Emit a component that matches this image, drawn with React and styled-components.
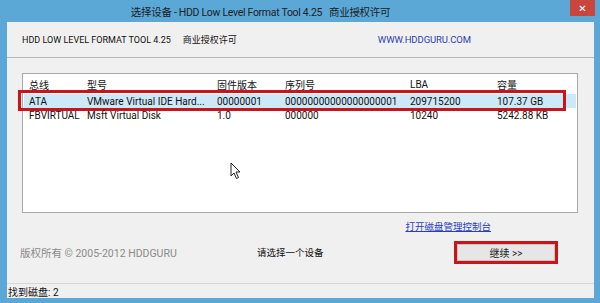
import React from 'react';
import styled, { createGlobalStyle } from 'styled-components';

const Global = createGlobalStyle`
  html, body {
    margin: 0;
    padding: 0;
    background: #5ba8d7;
  }
  * { box-sizing: border-box; }
`;

const font = `Roboto, "Noto Sans CJK SC", sans-serif`;

const Window = styled.div`
  position: relative;
  width: 600px;
  height: 303px;
  background: #5ba8d7;
  padding: 0 6px 5px 7px;
  display: flex;
  flex-direction: column;
  font-family: ${font};
`;

const TitleBar = styled.div`
  height: 22px;
  display: flex;
  align-items: center;
  justify-content: center;
  padding-right: 80px;
  font-size: 10.5px;
  letter-spacing: -0.3px;
  color: #1d1d1d;
`;

const Close = styled.div`
  position: absolute;
  top: 0;
  right: 5px;
  width: 25px;
  height: 16px;
  background: #c9463f;
  color: #fff;
  font-family: "DejaVu Sans", sans-serif;
  font-size: 10px;
  font-weight: bold;
  display: flex;
  align-items: center;
  justify-content: center;
`;

const Body = styled.div`
  flex: 1;
  background: #f0f0f0;
  display: flex;
  flex-direction: column;
`;

const Header = styled.div`
  height: 36px;
  display: flex;
  align-items: center;
  justify-content: space-between;
  padding: 0 123px 0 15px;
  border-bottom: 1px solid #b9b9b9;
  font-size: 9px;
  color: #111;
`;

const Product = styled.span`
  & > b {
    font-weight: normal;
    margin-left: 12px;
  }
`;

const Site = styled.span`
  color: #2b3fb0;
  font-size: 9.5px;
  letter-spacing: -0.1px;
`;

const ListBox = styled.div`
  position: relative;
  margin: 15px 16px 0 15px;
  height: 140px;
  background: #fff;
  border: 1px solid #a9a9a9;
  padding: 2px 1px 0;
`;

const Row = styled.div`
  position: relative;
  display: grid;
  grid-template-columns: 58px 130px 68px 125px 87px 1fr;
  align-items: center;
  height: ${p => (p.$head ? '18px' : '14px')};
  padding-left: 5px;
  padding-bottom: ${p => (p.$head ? '2px' : '0')};
  font-size: 10px;
  color: #111;
  white-space: nowrap;
  background: ${p => (p.$selected ? '#cde8f7' : 'transparent')};

  ${p => p.$selected && `
    &::after {
      content: "";
      position: absolute;
      left: -6px;
      right: 10px;
      top: -4px;
      bottom: -3px;
      border: 3px solid #c8151c;
    }
  `}
`;

const Cell = styled.span`
  overflow: hidden;
`;

const Cursor = styled.svg`
  position: absolute;
  left: 207px;
  top: 88px;
`;

const LinkRow = styled.div`
  display: flex;
  justify-content: flex-end;
  padding: 6px 103px 0 0;
  height: 20px;
`;

const Link = styled.a`
  font-size: 9.5px;
  color: #2a3dc2;
  text-decoration: underline;
`;

const ActionRow = styled.div`
  display: grid;
  grid-template-columns: 237px 1fr auto;
  align-items: center;
  padding: 4px 39px 0 13px;
  height: 34px;
  font-size: 10px;
`;

const Copyright = styled.span`
  color: #8a8a8a;
  font-size: 10.5px;
`;

const Message = styled.span`
  color: #111;
  font-size: 9.5px;
`;

const Button = styled.button`
  width: 98px;
  height: 17px;
  background: #e6e6e6;
  border: 1px solid #c4c4c4;
  outline: 3px solid #c8151c;
  outline-offset: 0;
  font-family: ${font};
  font-size: 10px;
  color: #222;
  padding: 0;
`;

const Spacer = styled.div`
  flex: 1;
`;

const StatusBar = styled.div`
  height: 15px;
  border-top: 1px solid #d6d6d6;
  display: flex;
  align-items: center;
  padding-left: 1px;
  font-size: 10px;
  color: #111;
`;

const columns = ['总线', '型号', '固件版本', '序列号', 'LBA', '容量'];

const disks = [
  ['ATA', 'VMware Virtual IDE Hard...', '00000001', '00000000000000000001', '209715200', '107.37 GB'],
  ['FBVIRTUAL', 'Msft Virtual Disk', '1.0', '000000', '10240', '5242.88 KB'],
];

export default function App() {
  return (
    <>
      <Global />
      <Window>
        <TitleBar>选择设备 - HDD Low Level Format Tool 4.25&nbsp;&nbsp;&nbsp;商业授权许可</TitleBar>
        <Close>✕</Close>
        <Body>
          <Header>
            <Product>HDD LOW LEVEL FORMAT TOOL 4.25<b>商业授权许可</b></Product>
            <Site>WWW.HDDGURU.COM</Site>
          </Header>
          <ListBox>
            <Row $head>
              {columns.map(c => <Cell key={c}>{c}</Cell>)}
            </Row>
            {disks.map((d, i) => (
              <Row key={d[0]} $selected={i === 0}>
                {d.map((v, j) => <Cell key={j}>{v}</Cell>)}
              </Row>
            ))}
            <Cursor width="12" height="18" viewBox="0 0 12 18">
              <path d="M1 1 L1 14 L4 11 L6.5 16.5 L8.5 15.5 L6 10 L10 10 Z" fill="#fff" stroke="#222" strokeWidth="1" strokeLinejoin="round" />
            </Cursor>
          </ListBox>
          <LinkRow>
            <Link>打开磁盘管理控制台</Link>
          </LinkRow>
          <ActionRow>
            <Copyright>版权所有 © 2005-2012 HDDGURU</Copyright>
            <Message>请选择一个设备</Message>
            <Button>继续 &gt;&gt;</Button>
          </ActionRow>
          <Spacer />
          <StatusBar>找到磁盘: 2</StatusBar>
        </Body>
      </Window>
    </>
  );
}
